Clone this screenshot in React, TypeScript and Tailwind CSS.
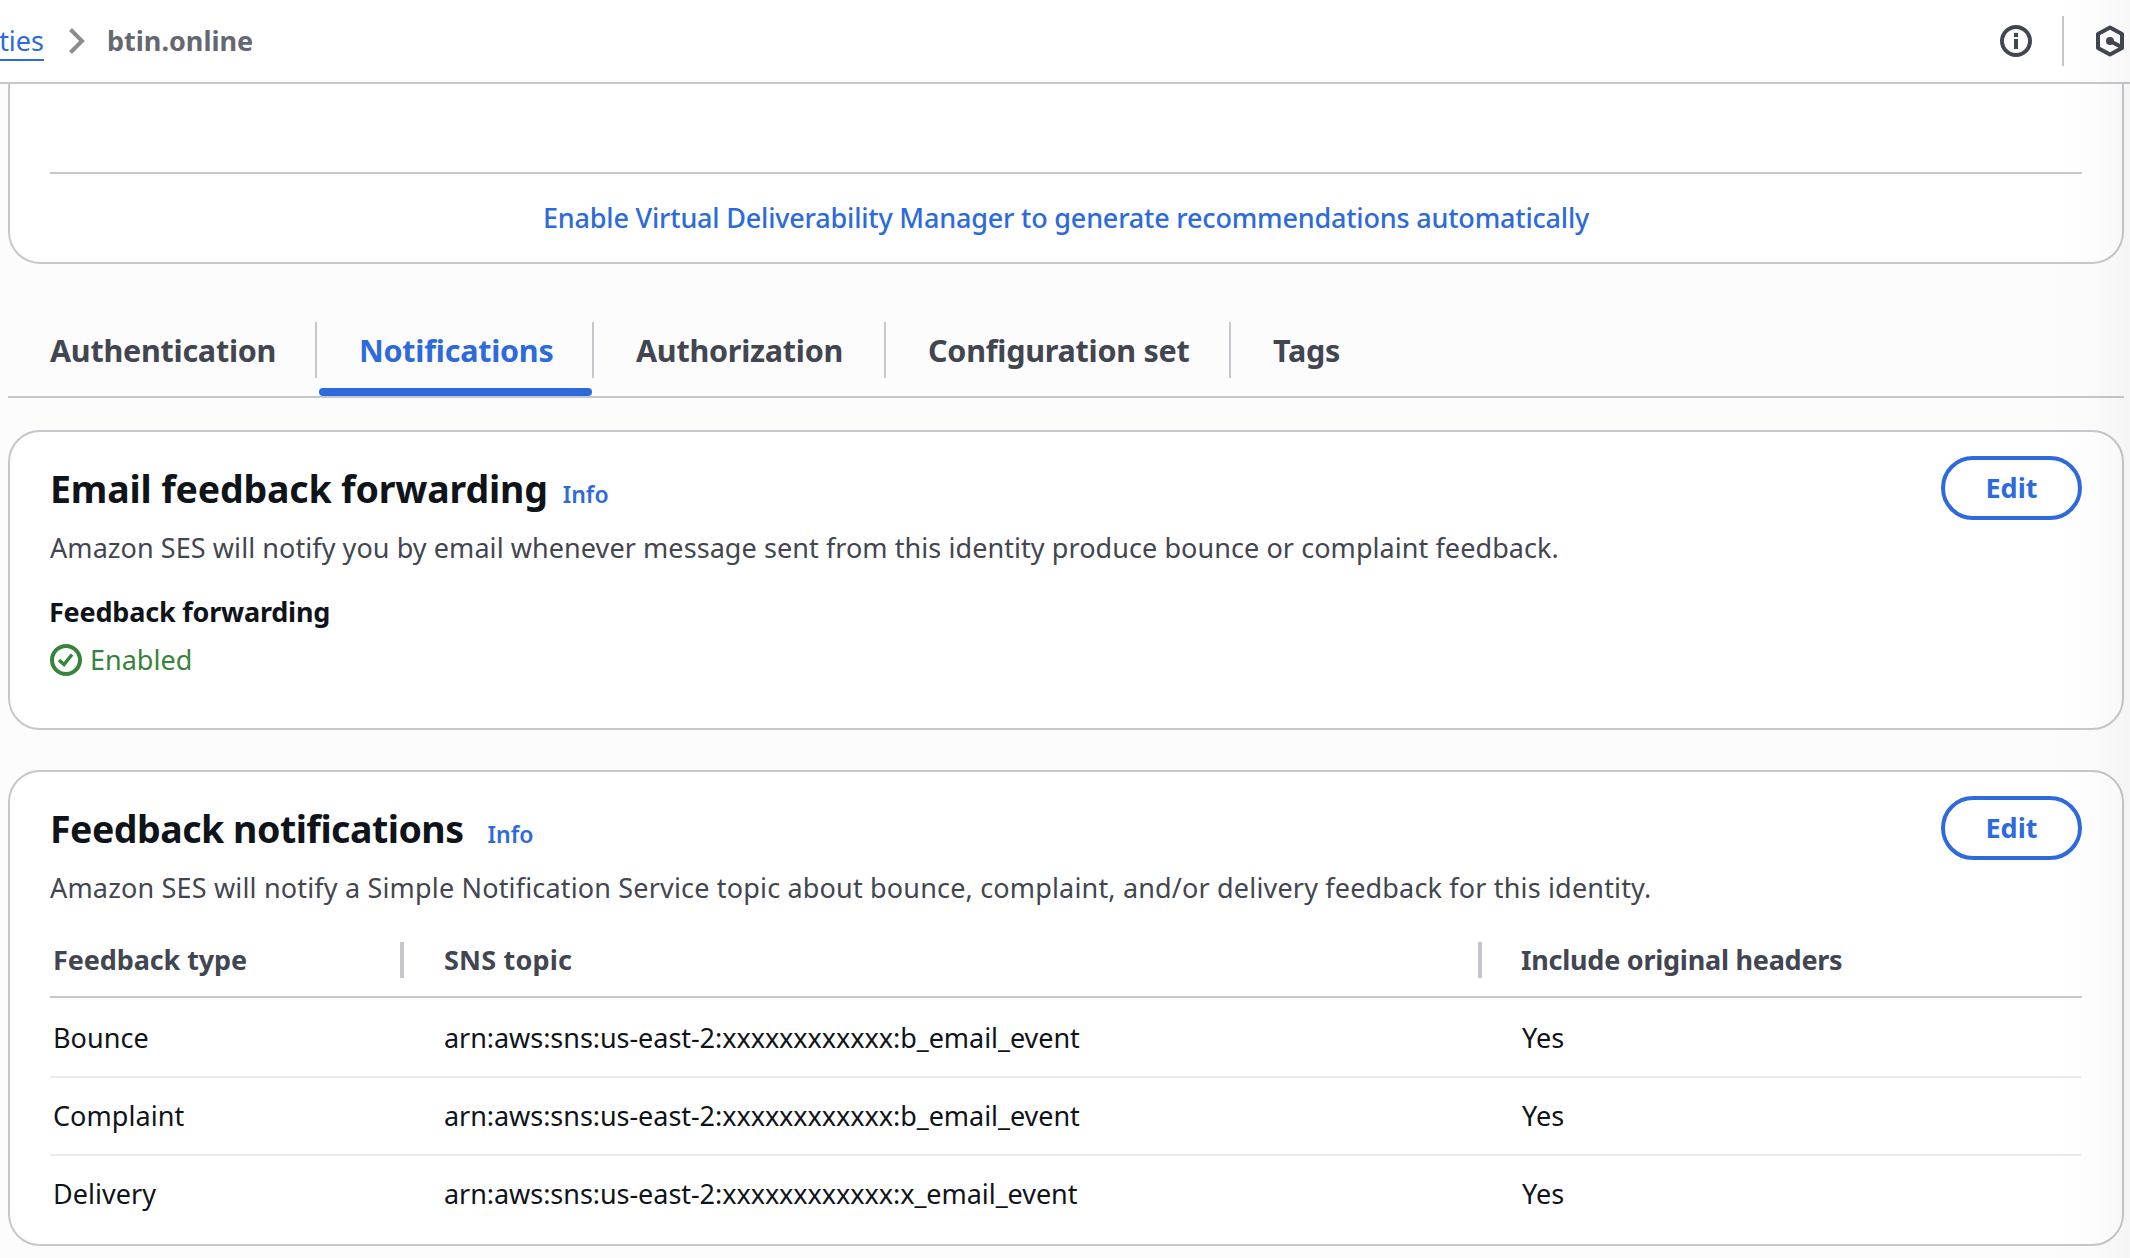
import React from 'react';

const rows = [
  { type: 'Bounce', topic: 'arn:aws:sns:us-east-2:xxxxxxxxxxxx:b_email_event', headers: 'Yes', box: 'h-20 border-b-2 pt-0.5' },
  { type: 'Complaint', topic: 'arn:aws:sns:us-east-2:xxxxxxxxxxxx:b_email_event', headers: 'Yes', box: 'h-[78px] border-b-2' },
  { type: 'Delivery', topic: 'arn:aws:sns:us-east-2:xxxxxxxxxxxx:x_email_event', headers: 'Yes', box: 'h-[76px]' },
];

const tabs = [
  { label: 'Authentication', width: 'w-[309px]' },
  { label: 'Notifications', width: 'w-[277px]', active: true },
  { label: 'Authorization', width: 'w-[292px]' },
  { label: 'Configuration set', width: 'w-[345px]' },
  { label: 'Tags', width: 'w-[140px]' },
];

function EditButton() {
  return (
    <button className="h-16 w-[141px] rounded-full border-4 border-[#2d6adb] text-[27px] font-bold text-[#2d6adb]">
      Edit
    </button>
  );
}

function CardHeader({ title, spacing, description }: { title: string; spacing: string; description: React.ReactNode }) {
  return (
    <>
      <div className="flex h-16 items-center justify-between">
        <div className="flex items-baseline pt-0.5">
          <h2 className={`text-[37.5px] leading-16 font-bold text-[#0f141a] ${spacing}`}>{title}</h2>
          <a className="text-[23px] font-semibold text-[#2d6adb]">Info</a>
        </div>
        <EditButton />
      </div>
      {description}
    </>
  );
}

function Header() {
  return (
    <header className="flex h-21 shrink-0 items-center border-b-2 border-[#c6c6cd] bg-white">
      <div className="flex w-11 justify-end overflow-hidden">
        <a className="mt-0.5 border-b-2 border-[#2d6adb] text-[27px] leading-9 whitespace-nowrap text-[#2d6adb]">ties</a>
      </div>
      <svg className="ml-6 h-[26px] w-[18px]" viewBox="0 0 18 26" fill="none" stroke="#8c8c94" strokeWidth="4">
        <path d="M2.5 1.5 14 13 2.5 24.5" />
      </svg>
      <span className="ml-[21px] text-[27px] font-bold text-[#656871]">btin.online</span>
      <div className="ml-auto flex items-center">
        <svg className="size-8" viewBox="0 0 32 32" fill="none">
          <circle cx="16" cy="16" r="14" stroke="#424650" strokeWidth="4" />
          <path d="M16 8v4M16 14v10" stroke="#424650" strokeWidth="4" />
        </svg>
        <div className="ml-[30px] h-[50px] w-0.5 bg-[#c6c6cd]" />
        <svg className="mr-[5px] ml-[31px] h-8 w-[30px]" viewBox="0 0 30 32" fill="none" stroke="#424650" strokeWidth="4" strokeLinejoin="round">
          <path d="M15 2.5 27 9v14l-12 6.5L3 23V9Z" />
          <circle cx="15" cy="16" r="4" fill="#424650" stroke="none" />
          <path d="m15 16 10.500 5.500" />
        </svg>
      </div>
    </header>
  );
}

export default function App() {
  return (
    <div className="relative flex h-[1258px] w-[2130px] flex-col overflow-hidden bg-[#fcfcfd] font-['Noto_Sans',sans-serif] text-[27px] leading-10">
      <Header />
      <main className="flex flex-col pr-1.5 pl-2">
        <section className="h-[180px] rounded-b-[32px] border-2 border-t-0 border-[#c6c6cd] bg-white px-10 pt-22">
          <div className="flex h-[90px] items-center justify-center border-t-2 border-[#c6c6cd]">
            <a className="font-medium tracking-[-0.2px] text-[#2d6adb]">
              Enable Virtual Deliverability Manager to generate recommendations automatically
            </a>
          </div>
        </section>

        <nav className="mt-12 flex h-[86px] border-b-2 border-[#c6c6cd]">
          {tabs.map((t, i) => (
            <div key={t.label} className={`flex flex-col justify-between ${t.width}`}>
              <div
                className={`mt-2.5 flex h-14 items-center pl-[42px] text-[30.5px] font-bold tracking-[-0.25px] ${
                  i < tabs.length - 1 ? 'border-r-2 border-[#c6c6cd]' : ''
                } ${t.active ? 'text-[#2d6adb]' : 'text-[#424650]'}`}
              >
                {t.label}
              </div>
              {t.active && <div className="mr-0.5 ml-0.5 h-2 rounded-[4px] bg-[#2d6adb]" />}
            </div>
          ))}
        </nav>

        <section className="mt-8 h-[300px] rounded-[32px] border-2 border-[#c6c6cd] bg-white px-10 pt-6">
          <CardHeader
            title="Email feedback forwarding"
            spacing="mr-[15px] tracking-[-0.17px]"
            description={
              <p className="mt-2 tracking-[0.07px] text-[#424650]">
                Amazon SES will notify you by email whenever message sent from this identity produce bounce or complaint feedback.
              </p>
            }
          />
          <h3 className="mt-6 -ml-px font-bold tracking-[-0.2px] text-[#0f141a]">Feedback forwarding</h3>
          <div className="mt-2 flex items-center text-[#37833b]">
            <svg className="size-8" viewBox="0 0 32 32" fill="none" stroke="#37833b" strokeWidth="4">
              <circle cx="16" cy="16" r="14" />
              <path d="m9 16 5 4.500 8-10" strokeWidth="3.5" />
            </svg>
            <span className="ml-2">Enabled</span>
          </div>
        </section>

        <section className="mt-10 h-[476px] rounded-[32px] border-2 border-[#c6c6cd] bg-white px-10 pt-6">
          <CardHeader
            title="Feedback notifications"
            spacing="mr-6 tracking-[-0.5px]"
            description={
              <p className="mt-2 tracking-[0.17px] text-[#424650]">
                Amazon SES will notify a Simple Notification Service topic about bounce, complaint, and/or delivery feedback for this
                identity.
              </p>
            }
          />
          <div className="mt-4 grid h-[74px] grid-cols-[354px_1078px_1fr] items-center border-b-2 border-[#c6c6cd] font-bold text-[#424650]">
            <div className="flex h-9 items-center border-r-4 border-[#c6c6cd] pl-[3px] tracking-[-0.1px]">Feedback type</div>
            <div className="flex h-9 items-center border-r-4 border-[#c6c6cd] pl-10">
              <span className="tracking-[0.2px]">SNS topic</span>
            </div>
            <div className="pl-[39px] tracking-[-0.25px]">Include original headers</div>
          </div>
          {rows.map((r) => (
            <div key={r.type} className={`mr-px grid grid-cols-[354px_1078px_1fr] items-center border-[#ebebf0] text-[#0f141a] ${r.box}`}>
              <div className="pl-[3px] tracking-[0.05px]">{r.type}</div>
              <div className="pl-10 tracking-[-0.05px]">{r.topic}</div>
              <div className="pl-10">{r.headers}</div>
            </div>
          ))}
        </section>
      </main>
      <div className="pointer-events-none absolute inset-y-0 right-0 w-20 bg-linear-to-r from-transparent via-black/[0.008] to-black/[0.03]" />
    </div>
  );
}
